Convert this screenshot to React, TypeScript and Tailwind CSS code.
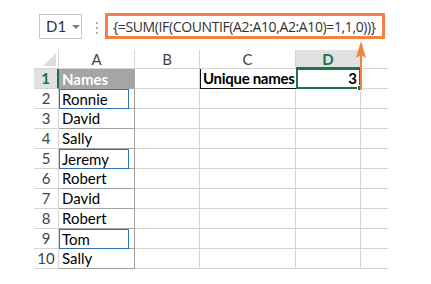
import React from "react";

const names = ["Ronnie", "David", "Sally", "Jeremy", "Robert", "David", "Robert", "Tom", "Sally"];
const boxed = [0, 3, 7];

const font = { fontFamily: "Lato, 'Liberation Sans', sans-serif" };

const App = () => {
  return (
    <div className="relative h-[284px] w-[431px] overflow-hidden bg-white" style={font}>
      {/* Formula bar */}
      <div className="flex items-start pl-[39px] pt-[13px]">
        <div className="mt-[1px] flex h-[25px] w-[43px] items-center border border-[#c6c6c6] pl-[6px] text-[15px] text-[#333]">
          <span>D1</span>
          <span className="ml-[6px] mt-[1px] h-0 w-0 border-x-[4px] border-t-[4px] border-x-transparent border-t-[#7a7a7a]" />
        </div>
        <div className="ml-[14px] mt-[9px] flex flex-col gap-[3px]">
          <span className="h-[2px] w-[2px] bg-[#b0b0b0]" />
          <span className="h-[2px] w-[2px] bg-[#b0b0b0]" />
          <span className="h-[2px] w-[2px] bg-[#b0b0b0]" />
        </div>
        <div
          className="ml-[7px] flex h-[26px] w-[280px] items-center whitespace-nowrap border-[3px] border-[#f4813f] pl-[5px] pt-[1px] text-[14px] text-[#333]"
          style={{ fontFamily: "'Open Sans', 'Liberation Sans', sans-serif", letterSpacing: "-0.38px" }}>
          {"{=SUM(IF(COUNTIF(A2:A10,A2:A10)=1,1,0))}"}
        </div>
      </div>

      {/* Sheet */}
      <div className="ml-[34px] mt-[11px] grid w-[354px] grid-cols-[25px_76px_65px_96px_65px_27px] grid-rows-[19px_repeat(10,20px)] text-[15px] leading-none">
        {/* header row */}
        <div className="relative border-b border-r border-[#d4d4d4]">
          <svg className="absolute bottom-[2px] right-[2px]" width="13" height="13" viewBox="0 0 13 13">
            <path d="M13 0 L13 13 L0 13 Z" fill="#dcdcdc" />
          </svg>
        </div>
        <div className="flex items-center justify-center border-b border-r border-[#d4d4d4] text-[#444]">A</div>
        <div className="flex items-center justify-center border-b border-r border-[#d4d4d4] text-[#444]">B</div>
        <div className="flex items-center justify-center border-b border-r border-[#d4d4d4] text-[#444]">C</div>
        <div className="flex items-center justify-center border-b-2 border-r border-b-[#217346] border-r-[#d4d4d4] bg-[#e1e1e1] pt-[2px] font-bold text-[#217346]">D</div>
        <div className="border-b border-[#d4d4d4]" />

        {/* row 1 */}
        <div className="flex items-center justify-center border-b border-r-2 border-b-[#d4d4d4] border-r-[#217346] bg-[#e1e1e1] font-bold text-[#217346]">1</div>
        <div className="flex items-center bg-[#a5a5a5] pl-[3px] font-bold text-white">Names</div>
        <div className="border-b border-r border-[#d4d4d4]" />
        <div className="flex items-center whitespace-nowrap border-b border-l border-[#111] pl-[2px] font-bold tracking-[-0.3px] text-black">Unique names</div>
        <div className="relative -mt-[1px] flex items-center justify-end border-2 border-[#217346] pr-[2px] font-bold text-black">
          3
          <span className="absolute -bottom-[4px] -right-[4px] h-[6px] w-[6px] border border-white bg-[#217346]" />
        </div>
        <div className="border-b border-[#d4d4d4]" />

        {names.map((name, i) => (
          <React.Fragment key={i}>
            <div className="flex items-center justify-center border-b border-r border-[#d4d4d4] text-[#444]">{i + 2}</div>
            <div className="flex items-stretch border-b border-r border-[#a0a0a0]">
              {boxed.includes(i) ? (
                <div className="-mb-[1px] flex w-[70px] items-center border border-[#2f75b5] pl-[2px] text-black">{name}</div>
              ) : (
                <div className="flex items-center pl-[3px] text-black">{name}</div>
              )}
            </div>
            <div className="border-b border-r border-[#d4d4d4]" />
            <div className="border-b border-r border-[#d4d4d4]" />
            <div className="border-b border-r border-[#d4d4d4]" />
            <div className="border-b border-[#d4d4d4]" />
          </React.Fragment>
        ))}
      </div>

      {/* Arrow pointing to formula */}
      <svg className="absolute left-[354px] top-[40px]" width="14" height="52" viewBox="0 0 14 52">
        <line x1="7" y1="12" x2="7" y2="50" stroke="#f4813f" strokeWidth="2" />
        <path d="M7 1 L12 18 L7 15 L2 18 Z" fill="#f4813f" />
      </svg>
    </div>
  );
};

export default App;
